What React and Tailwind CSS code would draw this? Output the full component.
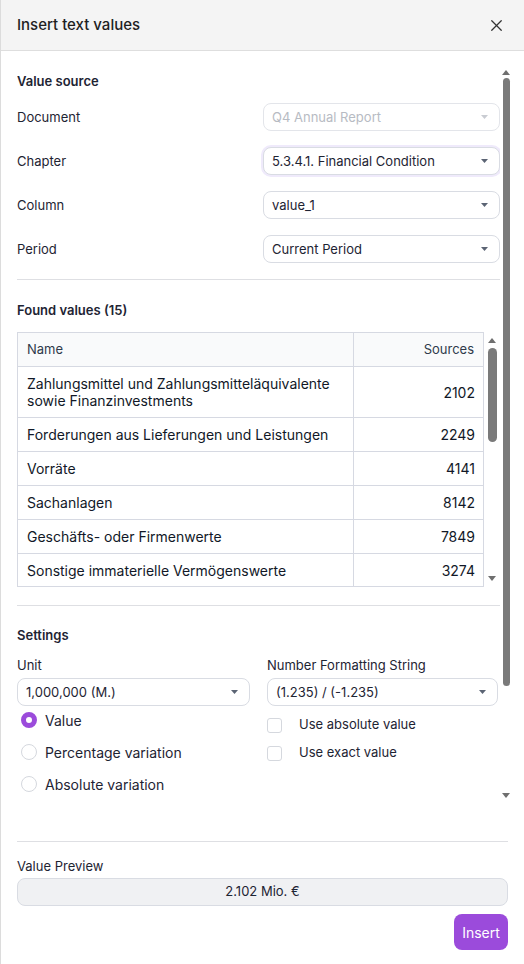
import React from "react";
import { X } from "lucide-react";

const rows = [
  { name: "Zahlungsmittel und Zahlungsmitteläquivalente sowie Finanzinvestments", value: 2102 },
  { name: "Forderungen aus Lieferungen und Leistungen", value: 2249 },
  { name: "Vorräte", value: 4141 },
  { name: "Sachanlagen", value: 8142 },
  { name: "Geschäfts- oder Firmenwerte", value: 7849 },
  { name: "Sonstige immaterielle Vermögenswerte", value: 3274 },
];

function Caret({ className = "text-[#6b7280]" }) {
  return (
    <svg width="7" height="4" viewBox="0 0 7 4" className={className}>
      <path d="M0 0h7L3.5 4z" fill="currentColor" />
    </svg>
  );
}

function ArrowUp() {
  return (
    <svg width="8" height="5" viewBox="0 0 8 5" className="text-[#6f6f6f]">
      <path d="M4 0l4 5H0z" fill="currentColor" />
    </svg>
  );
}

function ArrowDown() {
  return (
    <svg width="8" height="5" viewBox="0 0 8 5" className="text-[#6f6f6f]">
      <path d="M0 0h8L4 5z" fill="currentColor" />
    </svg>
  );
}

function Select({ value, disabled, focused, className = "" }) {
  return (
    <div
      className={`flex h-[28px] items-center justify-between rounded-lg border bg-white pl-[8px] pr-[11px] text-[13px] ${
        disabled ? "border-[#e3e5ea] text-[#b7bbc3]" : "border-[#d9dce3] text-[#1e2433]"
      } ${focused ? "shadow-[0_0_0_2px_#efeafb]" : ""} ${className}`}
    >
      <span className="pt-[1px]">{value}</span>
      <Caret className={disabled ? "text-[#c9ccd2]" : "text-[#5b6474]"} />
    </div>
  );
}

function FieldRow({ label, children }) {
  return (
    <div className="flex items-center justify-between">
      <span className="pt-[1px] text-[13px] text-[#1e2433]">{label}</span>
      <div className="w-[237px]">{children}</div>
    </div>
  );
}

function Radio({ label, checked }) {
  return (
    <div className="flex h-[32px] items-center gap-[8px] pl-[4px]">
      {checked ? (
        <span className="h-[16px] w-[16px] rounded-full border-[5px] border-[#9b4bdb] bg-white" />
      ) : (
        <span className="h-[16px] w-[16px] rounded-full border border-[#d5d8de] bg-white" />
      )}
      <span className="text-[14px] text-[#1e2433]">{label}</span>
    </div>
  );
}

function Checkbox({ label }) {
  return (
    <div className="flex h-[28px] items-center gap-[17px]">
      <span className="h-[15px] w-[15px] rounded-[3px] border border-[#d5d8de] bg-white" />
      <span className="text-[13px] text-[#1e2433]">{label}</span>
    </div>
  );
}

export default function App() {
  return (
    <div
      className="flex h-[964px] w-[524px] flex-col border-l border-[#dcdcdc] bg-white"
      style={{ fontFamily: "Inter, 'Noto Sans', sans-serif" }}
    >
      {/* Header */}
      <div className="flex h-[51px] shrink-0 items-center justify-between border-b border-[#dedede] bg-[#f4f4f4] pl-[16px] pr-[18px]">
        <h1 className="text-[15px] font-medium text-[#1f1f1f]">Insert text values</h1>
        <X className="h-[19px] w-[19px] text-[#333]" strokeWidth={1.6} />
      </div>

      {/* Scroll area */}
      <div className="flex h-[759px] shrink-0 pl-[16px] pr-[12px]">
        <div className="flex-1 overflow-hidden pt-[20px]">
          <h2 className="text-[13px] font-semibold leading-[20px] text-[#1e2433]">Value source</h2>
          <div className="mt-[12px] flex flex-col gap-[16px]">
            <FieldRow label="Document">
              <Select value="Q4 Annual Report" disabled />
            </FieldRow>
            <FieldRow label="Chapter">
              <Select value="5.3.4.1. Financial Condition" focused />
            </FieldRow>
            <FieldRow label="Column">
              <Select value="value_1" />
            </FieldRow>
            <FieldRow label="Period">
              <Select value="Current Period" />
            </FieldRow>
          </div>

          <div className="mt-[16px] border-t border-[#dedfe3]" />

          <h2 className="mt-[20px] text-[13px] font-semibold leading-[20px] text-[#1e2433]">Found values (15)</h2>

          {/* Table */}
          <div className="mt-[12px] flex">
            <div className="h-[255px] w-[467px] overflow-hidden border border-[#d6d9e2]">
              <div className="flex h-[34px] border-b border-[#d6d9e2] bg-[#f9fafb] text-[13px] text-[#2f3a4b]">
                <div className="flex w-[336px] items-center border-r border-[#d6d9e2] pl-[9px]">Name</div>
                <div className="flex flex-1 items-center justify-end pr-[9px]">Sources</div>
              </div>
              {rows.map((r) => (
                <div key={r.name} className="flex border-b border-[#d6d9e2] text-[14px] text-[#111827]">
                  <div className="flex min-h-[33px] w-[336px] items-center border-r border-[#d6d9e2] py-[8px] pl-[9px] pr-[20px] leading-[17px]">
                    {r.name}
                  </div>
                  <div className="flex flex-1 items-center justify-end pr-[8px]">{r.value}</div>
                </div>
              ))}
            </div>
            <div className="flex w-[16px] flex-col items-center pt-[6px]">
              <ArrowUp />
              <div className="mt-[5px] h-[94px] w-[9px] rounded-full bg-[#7a7a7a]" />
              <div className="flex-1" />
              <div className="mb-[6px]">
                <ArrowDown />
              </div>
            </div>
          </div>

          <div className="mt-[18px] border-t border-[#dedfe3]" />

          <h2 className="mt-[19px] text-[13px] font-semibold leading-[20px] text-[#1e2433]">Settings</h2>

          <div className="mt-[10px] grid grid-cols-2 gap-x-[17px]">
            <div>
              <div className="text-[13px] leading-[20px] text-[#1e2433]">Unit</div>
              <Select value="1,000,000 (M.)" className="mt-[3px]" />
              <div className="-mt-[2px] flex flex-col">
                <Radio label="Value" checked />
                <Radio label="Percentage variation" />
                <Radio label="Absolute variation" />
              </div>
            </div>
            <div>
              <div className="text-[13px] leading-[20px] text-[#1e2433]">Number Formatting String</div>
              <Select value="(1.235) / (-1.235)" className="mt-[3px] mr-[2px]" />
              <div className="mt-[5px] flex flex-col">
                <Checkbox label="Use absolute value" />
                <Checkbox label="Use exact value" />
              </div>
            </div>
          </div>
        </div>

        {/* Outer scrollbar */}
        <div className="flex w-[12px] flex-col items-center pt-[19px] pb-[12px]">
          <ArrowUp />
          <div className="mt-[3px] h-[608px] w-[7px] rounded-full bg-[#7a7a7a]" />
          <div className="flex-1" />
          <ArrowDown />
        </div>
      </div>

      {/* Footer */}
      <div className="pl-[16px] pr-[16px] pt-[31px]">
        <div className="border-t border-[#dedfe3]" />
        <div className="mt-[15px] text-[13px] leading-[18px] text-[#1e2433]">Value Preview</div>
        <div className="mt-[3px] flex h-[28px] items-center justify-center rounded-lg border border-[#d9dce3] bg-[#f0f1f3] text-[13px] text-[#1e2433]">
          2.102 Mio. €
        </div>
        <div className="mt-[8px] flex justify-end">
          <button className="h-[36px] w-[54px] rounded-lg bg-[#9b4bdb] text-[14px] text-white">Insert</button>
        </div>
      </div>
    </div>
  );
}
